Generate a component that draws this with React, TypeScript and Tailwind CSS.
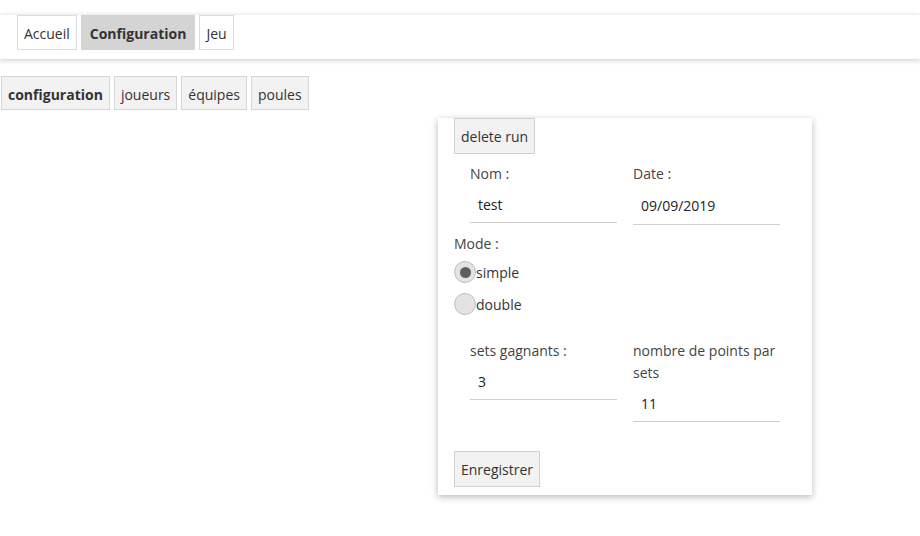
import React from "react";

function NavBtn({ label, active }: { label: string; active?: boolean }) {
  return (
    <button
      className={
        active
          ? "h-[35px] px-[8px] pt-[2px] bg-[#d4d4d4] border border-[#d4d4d4] font-bold text-[#333]"
          : "h-[35px] px-[6px] pt-[2px] bg-white border border-[#dcdcdc] text-[#333]"
      }
    >
      {label}
    </button>
  );
}

function TabBtn({ label, active }: { label: string; active?: boolean }) {
  return (
    <button
      className={
        "h-[34px] px-[6px] pt-[2px] bg-[#f2f2f2] border border-[#d6d6d6] text-[#333]" +
        (active ? " font-bold" : "")
      }
    >
      {label}
    </button>
  );
}

function Field({ label, value, h }: { label: React.ReactNode; value: string; h: string }) {
  return (
    <div className="flex flex-col">
      <div className="leading-[22px] pt-[1px] text-[#444]">{label}</div>
      <div className={"flex items-center pl-2 pt-[1px] border-b border-[#cfcfcf] text-[#222] " + h}>{value}</div>
    </div>
  );
}

function Radio({ label, checked }: { label: string; checked?: boolean }) {
  return (
    <div className="flex items-center h-[32px]">
      <span className="w-[22px] h-[22px] rounded-full bg-[#e3e3e3] border border-[#bdbdbd] flex items-center justify-center">
        {checked && <span className="w-[11px] h-[11px] rounded-full bg-[#5f5f5f]" />}
      </span>
      <span className="text-[#333] pt-[1px]">{label}</span>
    </div>
  );
}

export default function App() {
  return (
    <div
      className="w-[920px] h-[536px] bg-white text-[14px] text-[#333] overflow-hidden"
      style={{ fontFamily: '"Open Sans", "Noto Sans", sans-serif' }}
    >
      <div className="mt-[15px] h-[44px] bg-white shadow-[0_1px_5px_rgba(0,0,0,0.22)] flex items-start gap-1 pl-[17px]">
        <NavBtn label="Accueil" />
        <NavBtn label="Configuration" active />
        <NavBtn label="Jeu" />
      </div>
      <div className="mt-[17px] flex gap-1 pl-[1px]">
        <TabBtn label="configuration" active />
        <TabBtn label="joueurs" />
        <TabBtn label="équipes" />
        <TabBtn label="poules" />
      </div>
      <div className="mt-[8px] ml-[438px] w-[374px] bg-white shadow-[0_2px_7px_rgba(0,0,0,0.28)] px-4 pb-[8px] flex flex-col">
        <div>
          <button className="h-[36px] px-[6px] pt-[1px] bg-[#f2f2f2] border border-[#d0d0d0] text-[#333]">
            delete run
          </button>
        </div>
        <div className="mt-[8px] px-4 grid grid-cols-2 gap-x-4 items-start">
          <Field label="Nom :" value="test" h="h-[38px]" />
          <Field label="Date :" value="09/09/2019" h="h-[40px]" />
        </div>
        <div className="mt-[7px] leading-[22px] pt-[1px] text-[#444]">Mode :</div>
        <div className="mt-[1px] flex flex-col">
          <Radio label="simple" checked />
          <Radio label="double" />
        </div>
        <div className="mt-[19px] px-4 grid grid-cols-2 gap-x-4 items-start">
          <Field label="sets gagnants :" value="3" h="h-[38px]" />
          <Field label="nombre de points par sets" value="11" h="h-[38px]" />
        </div>
        <div className="mt-[29px]">
          <button className="h-[36px] px-[6px] pt-[1px] bg-[#f2f2f2] border border-[#d0d0d0] text-[#333]">
            Enregistrer
          </button>
        </div>
      </div>
    </div>
  );
}
